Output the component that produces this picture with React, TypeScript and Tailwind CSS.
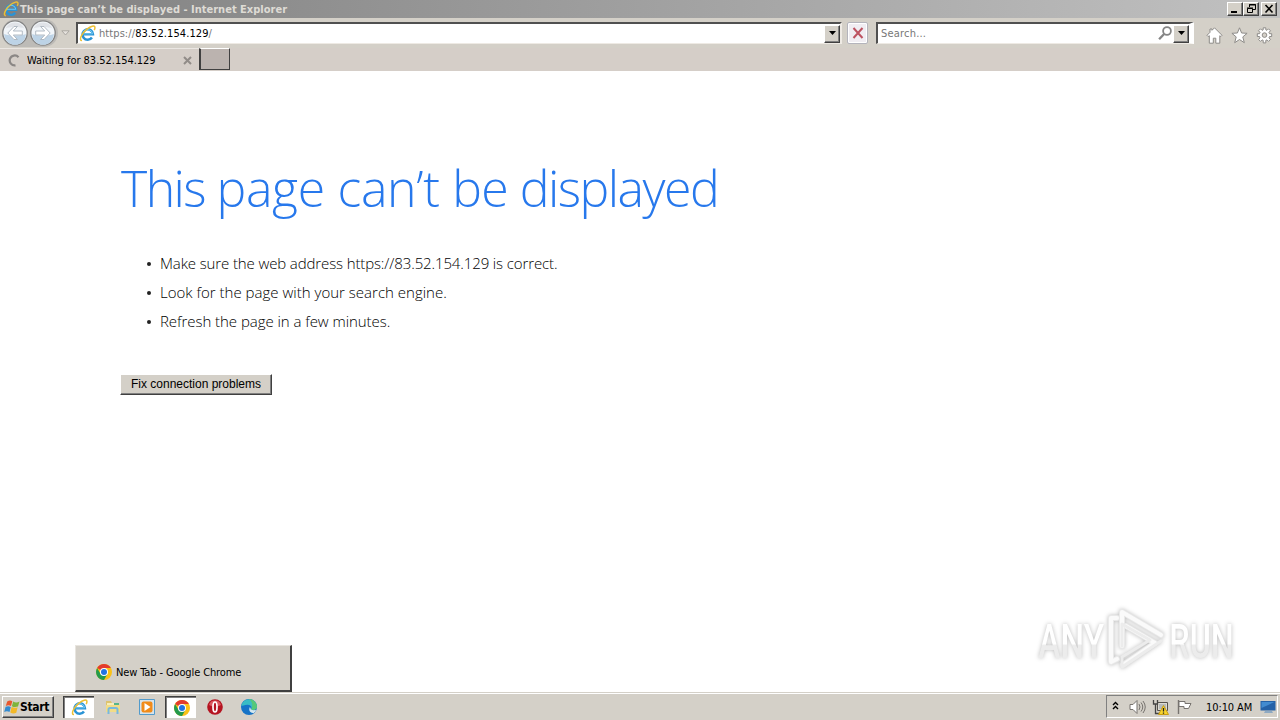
import type { ReactNode } from "react";

const ui = "font-['DejaVu_Sans_Condensed','DejaVu_Sans',sans-serif] [font-stretch:condensed]";
const raised =
  "border border-t-white border-l-white border-r-[#404040] border-b-[#404040] bg-[#d4d0c8] shadow-[inset_-1px_-1px_0_#808080]";

function IeLogo({ size }: { size: number }) {
  return (
    <svg width={size} height={size} viewBox="0 0 16 16" fill="none" className="shrink-0">
      <path d="M3.400 8.700h9.700a4.900 4.900 0 1 0-.9 3.100" stroke="#2a93d5" strokeWidth="2.400" />
      <path d="M4 8.300h8.800a4.700 4.700 0 0 0-8.800-1.600" stroke="#79cdf3" strokeWidth=".9" />
      <path d="M2.800 14.700C-.6 14.500 2.600 7.600 7.500 3.800c3.400-2.700 7.500-4 7.500-1.300 0 .9-.3 1.600-.7 2.300" stroke="#edbf32" strokeWidth="1.400" />
    </svg>
  );
}

function ChromeLogo() {
  return (
    <svg width="16" height="16" viewBox="0 0 16 16" className="shrink-0">
      <circle cx="8" cy="8" r="8" fill="#fbc116" />
      <path d="M8 8 1.1 4A8 8 0 0 1 14.9 4H8Z" fill="#e33b2e" />
      <path d="M1.1 4A8 8 0 0 0 8 16l3.4-6L8 8 4.6 10Z" fill="#249a4c" />
      <circle cx="8" cy="8" r="4" fill="#fff" />
      <circle cx="8" cy="8" r="3" fill="#2374e1" />
    </svg>
  );
}

function CaptionButton({ children }: { children: ReactNode }) {
  return (
    <div className={`${raised} h-[14px] w-4`}>
      <svg width="14" height="12" viewBox="0 0 14 12" fill="none" stroke="#000">{children}</svg>
    </div>
  );
}

function DropButton({ className = "" }: { className?: string }) {
  return (
    <div className={`${raised} flex h-[18px] w-4 items-center justify-center ${className}`}>
      <svg width="7" height="4" viewBox="0 0 7 4" className="-mt-[2px]"><path d="M0 0h7L3.5 4Z" fill="#000" /></svg>
    </div>
  );
}

function NavArrow({ flip = false }: { flip?: boolean }) {
  return (
    <svg width="26" height="26" viewBox="0 0 26 26" className={flip ? "-scale-x-100" : ""}>
      <circle cx="13" cy="13" r="12.2" fill="#f1f5f9" stroke="#848484" strokeWidth="1.3" />
      <path d="M2.2 14a10.8 10.8 0 0 0 21.6 0c-5 2-16 2-21.6 0" fill="#bdd3e6" />
      <path d="M3.5 8.5a10.5 10.5 0 0 1 19 0c-4-2-15-2-19 0" fill="#e0e3e8" />
      <path d="M12 6.5 5.8 13l6.2 6.5h3.400L11.300 15h9v-4h-9l4.100-4.500Z" fill="#fff" stroke="#aab4be" strokeWidth=".9" />
    </svg>
  );
}

function TitleBar() {
  return (
    <div className="flex h-[18px] items-center bg-linear-to-r from-[#808080] to-[#c1c1c1] pl-[3px] pr-[3px]">
      <IeLogo size={16} />
      <span className={`${ui} ml-px grow pt-px text-[11px] leading-[18px] font-bold tracking-[0.01px] whitespace-nowrap text-[#dedbd5]`}>
        This page can’t be displayed - Internet Explorer
      </span>
      <CaptionButton><path d="M3 9h6" strokeWidth="2" /></CaptionButton>
      <CaptionButton>
        <path d="M5.5 4V1.5h6v5H9M5 2h7" />
        <path d="M3.5 5.5h5v4h-5zM3 5h6" />
      </CaptionButton>
      <div className="w-[2px]" />
      <CaptionButton><path d="m3.5 2 7 7.5m0-7.5-7 7.5" strokeWidth="1.6" /></CaptionButton>
    </div>
  );
}

function Toolbar() {
  return (
    <div className="flex h-[30px] items-center bg-[#d4d0c8] pl-[2px]">
      <div className="flex h-[28px] w-[56px] items-center gap-[2px] rounded-full bg-[#bdbbb7]">
        <NavArrow />
        <NavArrow flip />
      </div>
      <svg width="9" height="6" viewBox="0 0 9 6" className="ml-[3px]"><path d="M.8.8h7.4L4.5 5Z" fill="#e5e2dd" stroke="#aaa7a2" /></svg>
      <div className="ml-[6px] flex h-[22px] w-[766px] items-center border-t-2 border-r-2 border-b border-l-2 border-t-[#505050] border-r-[#eeeae4] border-b-[#eeeae4] border-l-[#505050] bg-white pl-px">
        <IeLogo size={17} />
        <span className={`${ui} ml-[3px] grow pt-[2px] text-[11px] tracking-[0.08px] text-[#777]`}>
          https://<span className="text-black">83.52.154.129</span>/
        </span>
        <DropButton />
      </div>
      <div className="ml-[5px] flex h-[22px] w-[21px] items-center justify-center rounded-[2px] border border-[#b4b4bc] bg-[#f0edf2] shadow-[inset_0_0_0_1px_white]">
        <svg width="12" height="12" viewBox="0 0 12 12" stroke="#bd5361" strokeWidth="2" fill="none"><path d="m1.5 1 9 10M10.5 1l-9 10" /></svg>
      </div>
      <div className="ml-[8px] flex h-[22px] w-[318px] items-center border-t-2 border-r-[5px] border-b border-l-2 border-t-[#505050] border-r-white border-b-[#eeeae4] border-l-[#505050] bg-white">
        <span className={`${ui} ml-[3px] grow pt-[2px] text-[11px] tracking-[0.2px] text-[#777]`}>Search...</span>
        <svg width="15" height="15" viewBox="0 0 15 15" fill="none" stroke="#858585" strokeWidth="1.8"><circle cx="9" cy="5" r="3.9" /><path d="m6.1 8-5 5.3" strokeWidth="2.3" /></svg>
        <DropButton />
      </div>
      <div className="mt-[5px] ml-[12px] flex gap-[8px]">
        <svg width="17" height="17" viewBox="0 0 17 17" fill="#fff" stroke="#8d8b88"><path d="M8.5.8 16 8.3l-1.2 1.2-1-.8v7.5h-4v-5H7.3v5h-4V8.700l-1.1.8L1 8.300l3-3V2h2v1.300Z" /></svg>
        <svg width="17" height="17" viewBox="0 0 17 17" fill="#fff" stroke="#8d8b88"><path d="m8.500.8 2.100 5.200 5.500.3-4.300 3.600 1.500 5.800-4.800-3.200-4.800 3.200 1.500-5.800L.9 6.300 6.400 6Z" /></svg>
        <svg width="17" height="17" viewBox="0 0 17 17" fill="#fff" stroke="#8d8b88"><path d="M7.200.8h2.600v2l1.200.5 1.500-1.500 2 2L13 5.300l.5 1.400h2.200v2.800h-2.200L13 10.900l1.500 1.500-2 2-1.500-1.500-1.200.5v2.500H7.200v-2.500L6 12.900l-1.500 1.500-2-2L4 10.900l-.5-1.400H1.300V6.700h2.200L4 5.300 2.500 3.800l2-2L6 3.300l1.200-.5Z" /><circle cx="8.500" cy="8.100" r="2.300" fill="#d4d0c8" /></svg>
      </div>
    </div>
  );
}

function TabRow() {
  return (
    <div className="flex h-[23px] bg-[#d5cec8]">
      <div className="flex w-[199px] items-center border-t border-[#ebe7e3] pl-[8px]">
        <svg width="13" height="13" viewBox="0 0 13 13" fill="none" stroke="#8b8785" strokeWidth="2.2"><path d="M10.5 3.200A5 5 0 1 0 7.500 11.400" /></svg>
        <span className={`${ui} ml-[6px] grow pt-[2px] text-[11px] tracking-[-0.03px] text-black`}>Waiting for 83.52.154.129</span>
        <svg width="9" height="9" viewBox="0 0 9 9" stroke="#918c88" strokeWidth="2" className="mr-[7px]"><path d="m1 1 7 7M8 1 1 8" /></svg>
      </div>
      <div className="h-[22px] w-[31px] border-t border-r border-b border-l-2 border-t-white border-r-[#404040] border-b-[#404040] border-l-[#404040] bg-[#bbb3af]" />
    </div>
  );
}

const wordmark =
  "block w-max origin-left bg-linear-to-b from-white from-55% to-[#ececec] to-58% bg-clip-text px-[2px] pt-[3px] font-[Roboto,sans-serif] text-[49px] leading-[60px] font-medium whitespace-nowrap text-transparent";

function Watermark() {
  return (
    <div className="absolute top-[600px] left-[1037px] flex h-[80px] w-[220px] items-center drop-shadow-[0_0_2px_#bbb]">
      <div className="w-[67px] shrink-0"><span className={`${wordmark} scale-x-[0.68]`}>ANY</span></div>
      <svg width="64" height="76" viewBox="1104 602 64 76" fill="none" strokeLinejoin="round" strokeLinecap="round" className="shrink-0">
        <path d="M1117 618h-6v44l6-3M1122 646v-34l39 23m-35-9 29 17-32 22" stroke="#e9e9e9" strokeWidth="6" />
        <path d="M1117 618h-6v44l6-3M1122 646v-34l39 23m-35-9 29 17-32 22" stroke="#fafafa" strokeWidth="4" />
        <path d="M1122 646v-22l28 16-28 17v10l39-26" stroke="#ececec" strokeWidth="3" />
      </svg>
      <div className="w-[67px] shrink-0"><span className={`${wordmark} scale-x-[0.66]`}>RUN</span></div>
    </div>
  );
}

function ErrorPage() {
  const hints = [
    { text: "Make sure the web address https://83.52.154.129 is correct.", spacing: "tracking-[-0.12px]" },
    { text: "Look for the page with your search engine.", spacing: "tracking-[0.01px]" },
    { text: "Refresh the page in a few minutes.", spacing: "tracking-[-0.05px]" },
  ];
  return (
    <main className="grow bg-white pt-[82px] pl-[120px] font-['Open_Sans','Noto_Sans',sans-serif] font-light">
      <h1 className="h-[70px] pl-px text-[50px] leading-[70px] whitespace-nowrap text-[#2778ec]">
        <span className="tracking-[-1.56px]">This </span>
        <span className="tracking-[-0.36px]">page </span>
        <span className="tracking-[-0.3px]">can’t </span>
        <span className="tracking-[-0.96px]">be </span>
        <span className="tracking-[-1.5px]">displayed</span>
      </h1>
      <ul className="mt-[26px] text-[15px] leading-[29px] text-black">
        {hints.map(({ text, spacing }) => (
          <li key={text} className={`flex h-[29px] items-center whitespace-nowrap ${spacing}`}>
            <span className="mr-[9px] ml-[27px] size-[4px] rounded-full bg-[#222]" />
            {text}
          </li>
        ))}
      </ul>
      <button className={`${raised} mt-[38px] flex h-[21px] w-[152px] items-center justify-center pb-[2px] font-['Liberation_Sans',Arial,sans-serif] text-[12px] font-normal whitespace-nowrap text-black`}>
        Fix connection problems
      </button>
    </main>
  );
}

function TaskSlot({ active = false, className = "", children }: { active?: boolean; className?: string; children: ReactNode }) {
  return (
    <div className={`flex h-[22px] items-center justify-center ${active ? "border-t border-l border-[#404040] bg-white shadow-[inset_1px_1px_0_#808080]" : ""} ${className}`}>
      {children}
    </div>
  );
}

function Taskbar() {
  return (
    <footer className="flex h-[28px] items-center border-t border-[#d4d0c8] bg-[#d4d0c8] pl-[2px] shadow-[inset_0_1px_0_white]">
      <div className={`${raised} mt-[1px] flex h-[22px] w-[52px] items-center pl-px`}>
        <svg width="16" height="16" viewBox="-1 0 16 16" className="shrink-0">
          <path d="M2.200 2.500Q5 .8 7.300 2.200L6 7Q3.500 5.700 .8 7Z" fill="#e8582e" />
          <path d="M8.200 2.500Q11 4.400 14.500 2.600l-1.500 5Q9.500 8.700 6.900 7.200Z" fill="#7eb43b" />
          <path d="M.6 7.800Q3.500 6.500 5.800 8L4.500 13Q2 11.600-.8 13Z" fill="#338bd0" />
          <path d="M6.600 8q3 1.500 6 .3L11.300 13.800q-3 1.400-6-.3Z" fill="#f3b928" />
        </svg>
        <span className={`${ui} text-[12px] font-bold tracking-[-0.35px] text-black`}>Start</span>
      </div>
      <TaskSlot active className="mt-[1px] ml-[9px] w-[31px]"><IeLogo size={17} /></TaskSlot>
      <TaskSlot className="ml-[3px] w-[31px]">
        <svg width="16" height="16" viewBox="0 0 16 16">
          <path d="M1 2h5l1 2h7v9H1Z" fill="#ddc36e" />
          <path d="M2 4h11v7H2Z" fill="#f6edb8" />
          <path d="M1 6h14v7H1Z" fill="#f2dc86" />
          <path d="M9 4h5v2H9Z" fill="#57b58a" />
          <path d="M3.500 15v-4.500q0-1.500 1.500-1.500h6q1.500 0 1.500 1.500V15" fill="none" stroke="#78b9dd" strokeWidth="2" />
        </svg>
      </TaskSlot>
      <TaskSlot className="ml-[3px] w-[31px]">
        <svg width="16" height="16" viewBox="0 0 16 16">
          <path d="M.5.5h15v15H.5Z" fill="#d7e3ea" stroke="#529bcc" />
          <rect x="2.500" y="2.500" width="11" height="11" rx="2" fill="#f18b19" />
          <path d="m5.500 4 6 4-6 4Z" fill="#fff" />
        </svg>
      </TaskSlot>
      <TaskSlot active className="mt-[1px] ml-[3px] w-[31px] pl-px"><ChromeLogo /></TaskSlot>
      <TaskSlot className="ml-[3px] w-[31px]">
        <svg width="16" height="16" viewBox="0 0 16 16">
          <circle cx="8" cy="8" r="7.800" fill="#b51421" />
          <path d="M2 6a6.300 6.300 0 0 1 12 0Q8 9 2 6" fill="#dc5960" />
          <ellipse cx="8" cy="8" rx="2" ry="5" fill="#b51421" stroke="#fff" strokeWidth="1.700" />
        </svg>
      </TaskSlot>
      <TaskSlot className="ml-[3px] w-[31px]">
        <svg width="16" height="16" viewBox="0 0 16 16">
          <circle cx="8" cy="8" r="8" fill="#1673c7" />
          <path d="M.3 7A7.900 7.900 0 0 1 16 7.500c0 3-3.200 4-6 3 1.500-2-.2-4.800-3.500-4.800C3.500 5.700 1 7 .3 7" fill="#39bcc5" />
          <path d="M8 0a8 8 0 0 1 8 7.500c0 3-3.200 4-6 3C12 8 12 3 8 0" fill="#55c878" />
          <path d="M9.700 10.300c2.200 1.400 4.400 1 5.700.4a8 8 0 0 1-2.500 3.200c-3 .6-6-2.100-4-5.900.5.500.9 1.500.8 2.300" fill="#d4e7ee" />
        </svg>
      </TaskSlot>
      <div className="mr-[2px] ml-auto flex h-[23px] w-[172px] items-center border border-t-[#808080] border-r-white border-b-white border-l-[#808080]">
        <svg width="7" height="9" viewBox="0 0 7 9" fill="none" stroke="#000" strokeWidth="1.400" className="-mt-[2px] ml-[5px]"><path d="m1 4 2.500-2.500L6 4M1 8l2.500-2.500L6 8" /></svg>
        <svg width="17" height="16" viewBox="0 0 17 16" fill="none" stroke="#77736f" className="ml-[10px]">
          <path d="M1 5.500h3l4-4v13l-4-4H1Z" fill="#fff" /><path d="M10 5q2 3 0 6M12 3.500q3.500 4.500 0 9M14 2q4.500 6 0 12" />
        </svg>
        <svg width="17" height="17" viewBox="0 0 17 17" className="mt-px ml-[6px]">
          <path d="M5.500 3.500h10v8h-10Z" fill="#dedbd3" stroke="#55524e" /><path d="M7 5h7v5H7Z" fill="#b7bbbc" />
          <path d="M1.500 1v4h4V1M3.500 5v9.500h6" fill="none" stroke="#444" strokeWidth="1.300" />
          <path d="M11.500 6.500 16.500 15.500h-10Z" fill="#f8d42c" stroke="#c99d12" /><path d="M11.500 9v3.500m0 1v1.300" stroke="#222" strokeWidth="1.300" />
        </svg>
        <svg width="17" height="16" viewBox="0 0 17 16" fill="#fff" stroke="#77736f" className="ml-[7px]"><path d="M2.500 1v14" strokeWidth="1.400" /><path d="M3 2.500h6v2h6l-2.500 5H8v-2H3Z" /></svg>
        <span className={`${ui} ml-[13px] pt-[3px] text-[11px] tracking-[-0.1px] whitespace-nowrap text-black`}>10:10 AM</span>
        <svg width="16" height="14" viewBox="0 0 16 14" className="mr-[1px] ml-auto shrink-0"><path d="M.5 1h15v9.500H.5Z" fill="#2461a7" /><path d="M1.500 2h13L1.500 8Z" fill="#428bd0" /><path d="M5 11h7l1 2H4Z" fill="#8ea9c2" /></svg>
      </div>
    </footer>
  );
}

export default function App() {
  return (
    <div className="relative flex h-[720px] w-[1280px] flex-col overflow-hidden bg-white">
      <TitleBar />
      <Toolbar />
      <TabRow />
      <ErrorPage />
      <Taskbar />
      <Watermark />
      <div className="absolute top-[645px] left-[75px] flex h-[47px] w-[217px] items-center border-t border-r-2 border-b-2 border-l border-t-[#e8e5df] border-r-[#404040] border-b-[#404040] border-l-[#e8e5df] bg-[#d4d0c8] pt-[7px] pl-[20px]">
        <ChromeLogo />
        <span className={`${ui} ml-[4px] pt-[3px] text-[11px] tracking-[-0.12px] whitespace-nowrap text-black`}>New Tab - Google Chrome</span>
      </div>
    </div>
  );
}
